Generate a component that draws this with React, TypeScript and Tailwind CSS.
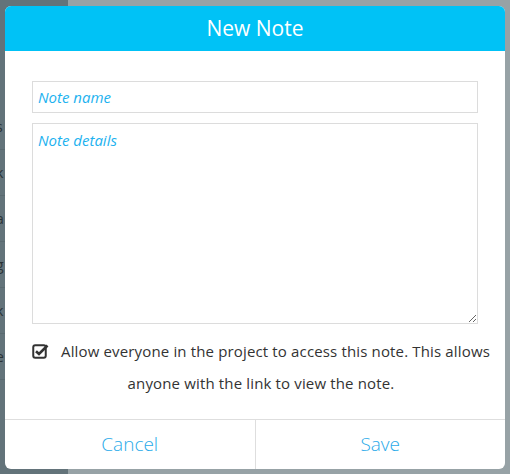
import React from "react";

const behindRows = ["s", "k", "a", "g", "k", "e"];

// check-square-o style icon
const CheckSquare = () => (
  <svg width="17" height="16" viewBox="0 0 17 16" className="inline-block align-[-2px]">
    <rect x="1.25" y="2.25" width="12.5" height="12.5" rx="2" fill="none" stroke="#333" strokeWidth="2" />
    <path d="M4 8.2 L7 11 L15.5 2.5" fill="none" stroke="#333" strokeWidth="2.6" strokeLinejoin="miter" />
  </svg>
);

const App = () => {
  return (
    <div className="relative h-[474px] w-[510px] overflow-hidden font-['Open_Sans',sans-serif]">
      {/* dimmed page behind the dialog */}
      <div className="flex h-full w-full">
        <div className="w-[68px] bg-[#63737a] pt-[104px]">
          {behindRows.map((r, i) => (
            <div
              key={i}
              className="flex h-[46px] items-center border-b border-[#5a6a70] text-[14px] text-[#2a3236]"
            >
              <span className="-ml-[4px]">{r}</span>
            </div>
          ))}
        </div>
        <div className="flex-1 bg-[#97a2a6]"></div>
      </div>

      {/* dialog */}
      <div className="absolute left-[5px] top-[6px] flex h-[463px] w-[500px] flex-col overflow-hidden rounded-[6px] bg-white">
        <div className="flex h-[45px] items-center justify-center bg-[#00c2f6] text-[21px] text-white">
          New Note
        </div>

        <div className="flex flex-1 flex-col pt-[30px]">
          <div className="px-[27px]">
            <input
              className="block h-[32px] w-full border border-[#dcdcdc] px-[5px] text-[15px] italic outline-none placeholder:text-[#1cb2ef]"
              placeholder="Note name"
            />
            <textarea
              className="mt-[10px] block h-[201px] w-full resize-y border border-[#dcdcdc] px-[5px] py-[5px] text-[15px] italic outline-none placeholder:text-[#1cb2ef]"
              placeholder="Note details"
            />
          </div>
          <p className="mt-[11px] pl-[22px] pr-[10px] text-center text-[15px] leading-[32px] tracking-[0.15px] text-[#333]">
            <CheckSquare />
            <span className="ml-[12px]">
              Allow everyone in the project to access this note. This allows anyone with the link to view the
              note.
            </span>
          </p>
        </div>

        <div className="flex h-[50px] border-t border-[#dedede]">
          <button className="flex-1 border-r border-[#dedede] text-[19px] font-light text-[#2aaae9]">
            Cancel
          </button>
          <button className="flex-1 text-[19px] font-light text-[#2aaae9]">Save</button>
        </div>
      </div>
    </div>
  );
};

export default App;
